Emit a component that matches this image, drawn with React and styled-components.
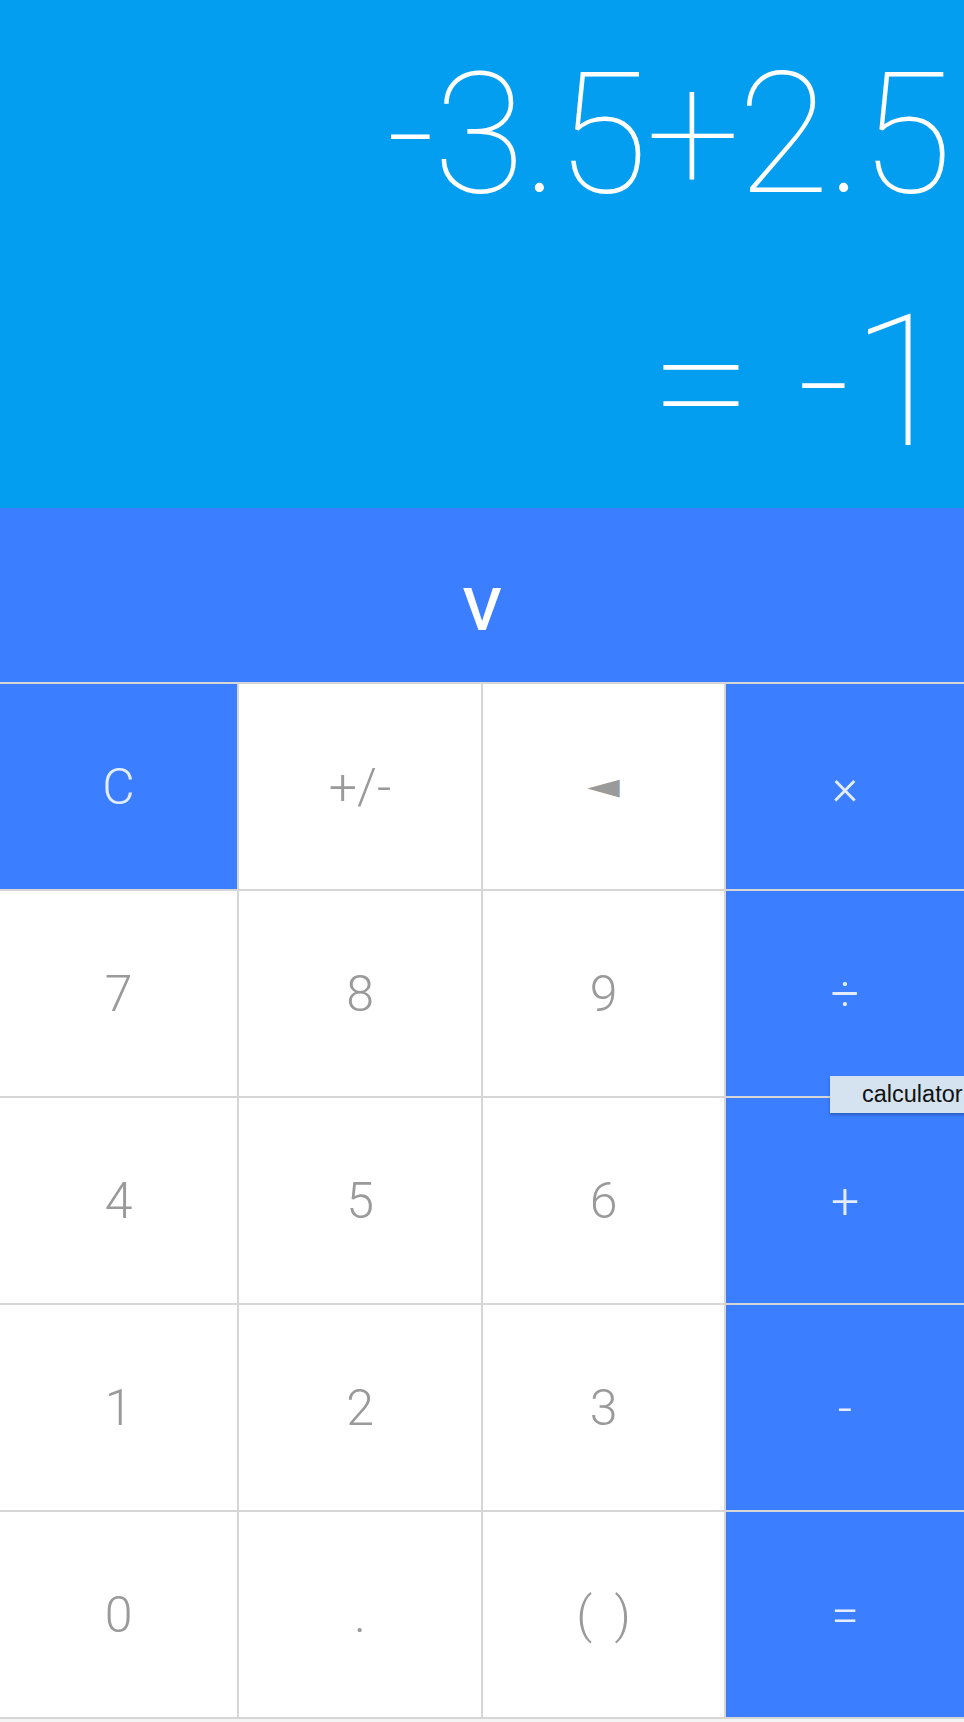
import React from "react";
import styled, { createGlobalStyle } from "styled-components";

const GlobalStyle = createGlobalStyle`
  html, body {
    margin: 0;
    padding: 0;
    background: #f4f4f4;
    overflow: hidden;
  }
  body {
    font-family: Roboto, "Noto Sans", sans-serif;
  }
`;

const BLUE = "#3b7eff";

const Calculator = styled.div`
  position: relative;
  width: 100vw;
  min-height: 100vh;
  overflow: hidden;
`;

const Display = styled.div`
  height: 508px;
  box-sizing: border-box;
  padding: 51px 12px 0 0;
  background: #049ef1;
  color: #fff;
  text-align: right;
  font-weight: 100;
  white-space: nowrap;
`;

const Expression = styled.div`
  margin-right: 2px;
  font-size: 168px;
  line-height: 168px;
  letter-spacing: -2.5px;
`;

const Result = styled.div`
  margin-top: 71px;
  font-size: 184px;
  line-height: 184px;
`;

const Toggle = styled.div`
  height: 174px;
  box-sizing: border-box;
  padding-top: 29px;
  display: flex;
  align-items: center;
  justify-content: center;
  background: ${BLUE};
  color: #fff;
  font-size: 60px;
  font-weight: 500;
`;

const Keypad = styled.div`
  display: grid;
  grid-template-columns: 237fr 242fr 241fr 238fr;
  grid-auto-rows: 205px;
  gap: 2px;
  padding: 2px 0;
  background: #d6d6d6;
`;

const Key = styled.div`
  display: flex;
  align-items: center;
  justify-content: center;
  background: ${(p) => (p.$op ? BLUE : "#fff")};
  color: ${(p) => (p.$op ? "rgba(255, 255, 255, 0.86)" : "#9a9a9a")};
  font-size: 50px;
  font-weight: 300;
  word-spacing: 10px;
  user-select: none;
`;

// backspace arrow is wider than it is tall in the original
const Arrow = styled.span`
  display: inline-block;
  font-family: "DejaVu Sans", sans-serif;
  font-size: 54px;
  line-height: 1;
  transform: scale(1, 0.55);
`;

const Tooltip = styled.div`
  position: absolute;
  top: 1076px;
  left: 830px;
  height: 37px;
  padding: 0 12px 0 32px;
  background: #d4e3ef;
  box-shadow: 0 2px 3px rgba(0, 0, 0, 0.25);
  color: #111;
  font-family: "Liberation Sans", Arial, sans-serif;
  font-size: 23.5px;
  line-height: 37px;
  white-space: nowrap;
`;

const keys = [
  { label: "C", op: true },
  { label: "+/-" },
  { label: "◄", arrow: true },
  { label: "×", op: true },
  { label: "7" },
  { label: "8" },
  { label: "9" },
  { label: "÷", op: true },
  { label: "4" },
  { label: "5" },
  { label: "6" },
  { label: "+", op: true },
  { label: "1" },
  { label: "2" },
  { label: "3" },
  { label: "-", op: true },
  { label: "0" },
  { label: "." },
  { label: "( )" },
  { label: "=", op: true },
];

const App = () => {
  return (
    <Calculator>
      <GlobalStyle />
      <Display>
        <Expression>-3.5+2.5</Expression>
        <Result>= -1</Result>
      </Display>
      <Toggle>V</Toggle>
      <Keypad>
        {keys.map((k) => (
          <Key key={k.label} $op={k.op}>
            {k.arrow ? <Arrow>{k.label}</Arrow> : k.label}
          </Key>
        ))}
      </Keypad>
      <Tooltip>calculator</Tooltip>
    </Calculator>
  );
};

export default App;
